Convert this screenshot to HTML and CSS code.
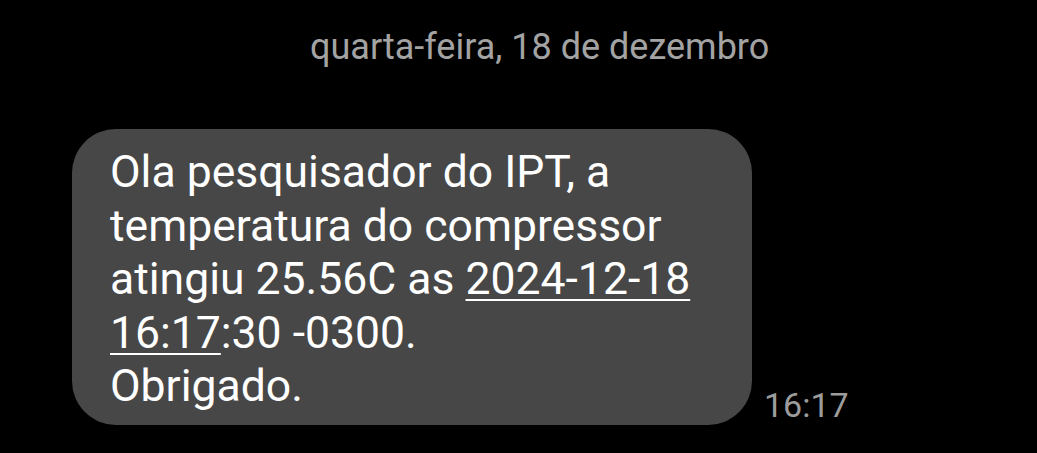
FILE: index.html
```html
<!DOCTYPE html>
<html lang="pt">
<head>
<meta charset="utf-8">
<link rel="stylesheet" href="styles.css">
</head>
<body>
<div class="screen">
  <div class="date">quarta-feira, 18 de dezembro</div>
  <div class="row">
    <div class="bubble">Ola pesquisador do IPT, a<br>temperatura do compressor<br>atingiu 25.56C as <span class="link">2024-12-18</span><br><span class="link">16:17</span>:30 -0300.<br>Obrigado.</div>
    <div class="time">16:17</div>
  </div>
</div>
</body>
</html>
```
FILE: styles.css
```css
html, body {
  margin: 0;
  padding: 0;
  background: #000;
}
.screen {
  width: 1037px;
  height: 453px;
  background: #000;
  font-family: Roboto, "Noto Sans", sans-serif;
  display: flex;
  flex-direction: column;
}
.date {
  color: #a3a3a3;
  font-size: 36px;
  line-height: 42px;
  padding-top: 26px;
  padding-left: 310px;
}
.row {
  display: flex;
  align-items: flex-end;
  gap: 12px;
  margin-top: 61px;
  padding-left: 72px;
}
.bubble {
  width: 680px;
  box-sizing: border-box;
  background: #474747;
  color: #fff;
  font-size: 44.5px;
  line-height: 53.5px;
  padding: 17px 20px 11px 38px;
  border-radius: 44px;
  white-space: nowrap;
}
.link {
  text-decoration: underline;
  text-decoration-thickness: 2px;
  text-underline-offset: 5px;
}
.time {
  color: #9c9c9c;
  font-size: 34px;
  line-height: 40px;
}
```
